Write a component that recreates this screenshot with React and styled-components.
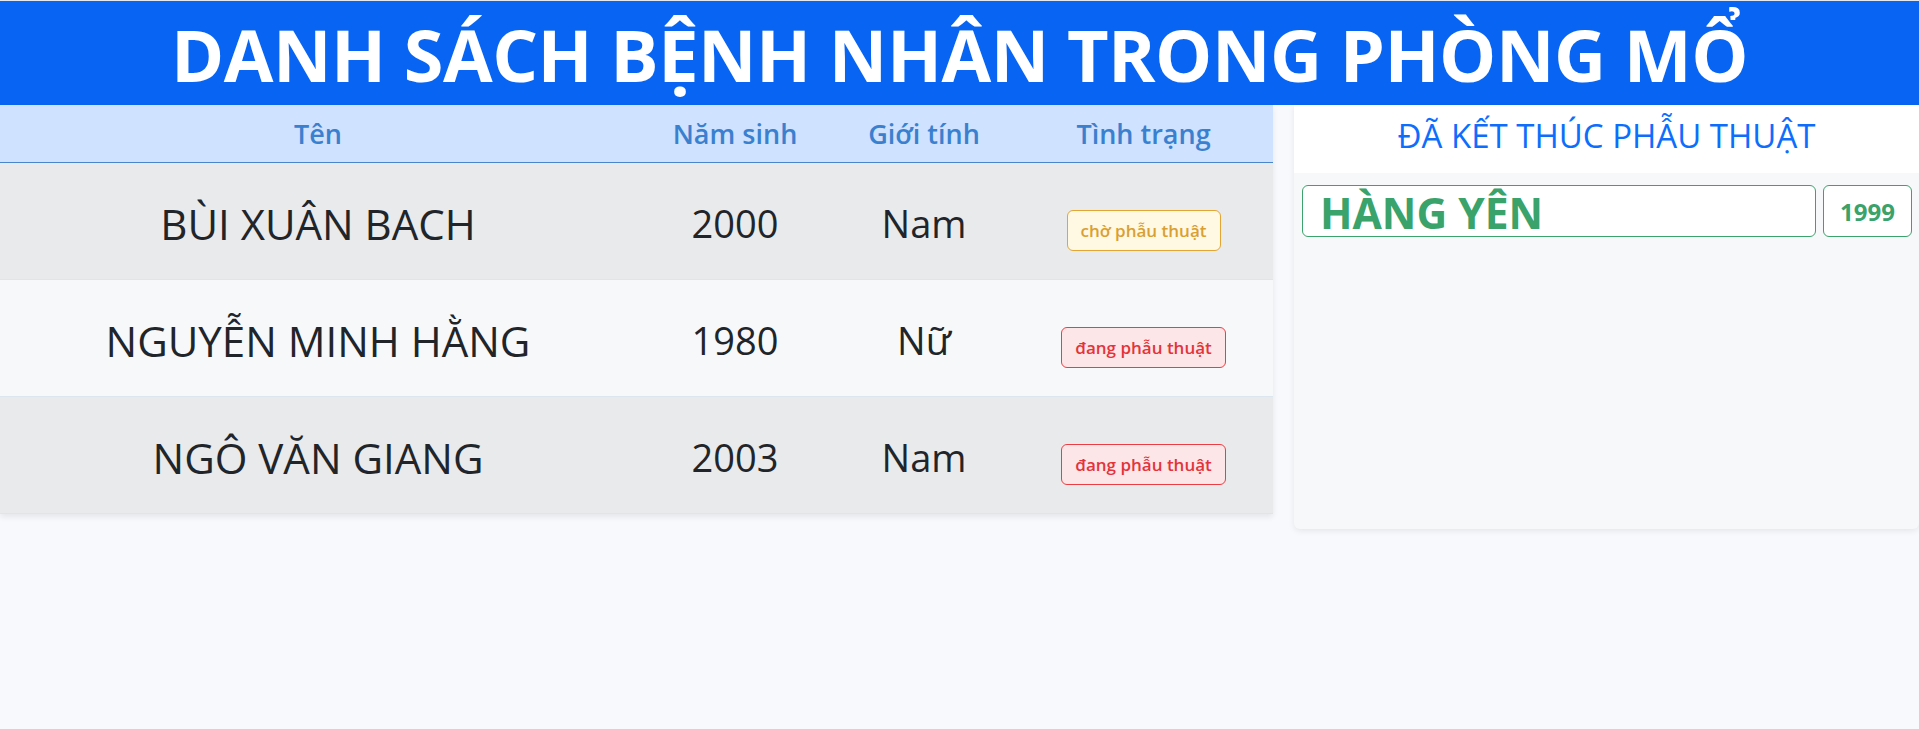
import React from 'react';
import styled, { createGlobalStyle } from 'styled-components';

const GlobalStyle = createGlobalStyle`
  html, body {
    margin: 0;
    padding: 0;
    background: #f8f9fd;
    font-family: "Open Sans", "Noto Sans", sans-serif;
    color: #212529;
  }
  * { box-sizing: border-box; }
`;

const patients = [
  { name: 'BÙI XUÂN BACH', year: 2000, gender: 'Nam', status: 'waiting' },
  { name: 'NGUYỄN MINH HẰNG', year: 1980, gender: 'Nữ', status: 'operating' },
  { name: 'NGÔ VĂN GIANG', year: 2003, gender: 'Nam', status: 'operating' },
];

const finished = [{ name: 'HÀNG YÊN', year: 1999 }];

const statusText = {
  waiting: 'chờ phẫu thuật',
  operating: 'đang phẫu thuật',
};

const App = () => {
  return (
    <>
      <GlobalStyle />
      <Page>
        <Header>
          <Title>DANH SÁCH BỆNH NHÂN TRONG PHÒNG MỔ</Title>
        </Header>
        <Content>
          <Table>
            <HeadRow>
              <HeadCell>Tên</HeadCell>
              <HeadCell>Năm sinh</HeadCell>
              <HeadCell>Giới tính</HeadCell>
              <HeadCell>Tình trạng</HeadCell>
            </HeadRow>
            {patients.map((p, i) => (
              <Row key={p.name} $striped={i % 2 === 0}>
                <NameCell>{p.name}</NameCell>
                <Cell>{p.year}</Cell>
                <Cell>{p.gender}</Cell>
                <Cell>
                  <Badge $status={p.status}>{statusText[p.status]}</Badge>
                </Cell>
              </Row>
            ))}
          </Table>
          <Panel>
            <PanelHeader>ĐÃ KẾT THÚC PHẪU THUẬT</PanelHeader>
            <PanelBody>
              {finished.map((f) => (
                <DoneRow key={f.name}>
                  <DoneName>{f.name}</DoneName>
                  <DoneYear>{f.year}</DoneYear>
                </DoneRow>
              ))}
            </PanelBody>
          </Panel>
        </Content>
      </Page>
    </>
  );
};

export default App;

const Page = styled.div`
  min-height: 729px;
  border-top: 1px solid #e4e7ec;
`;

const Header = styled.header`
  height: 104px;
  background: #0865f3;
  display: flex;
  align-items: center;
  justify-content: center;
`;

const Title = styled.h1`
  margin: 0;
  color: #fff;
  font-size: 72px;
  font-weight: 700;
  line-height: 1;
  padding-top: 2px;
  letter-spacing: -0.5px;
`;

const Content = styled.div`
  display: flex;
  align-items: flex-start;
  gap: 21px;
`;

const Table = styled.div`
  width: 1273px;
  flex-shrink: 0;
  box-shadow: 0 3px 6px rgba(0, 0, 0, 0.08);
`;

const columns = '636px 198px 180px 1fr';

const HeadRow = styled.div`
  display: grid;
  grid-template-columns: ${columns};
  height: 58px;
  align-items: center;
  background: #cfe2ff;
  border-bottom: 1px solid #4a86cc;
`;

const HeadCell = styled.div`
  text-align: center;
  font-size: 27px;
  font-weight: 600;
  color: #3a80cf;
`;

const Row = styled.div`
  display: grid;
  grid-template-columns: ${columns};
  height: 117px;
  align-items: center;
  background: ${(p) => (p.$striped ? '#e9eaec' : '#f7f8fa')};
  border-bottom: 1px solid #dde5ee;
`;

const Cell = styled.div`
  text-align: center;
  font-size: 38px;
  padding-top: 4px;
`;

const NameCell = styled(Cell)`
  font-size: 42px;
`;

const badgeColors = {
  waiting: { bg: '#fff8e3', border: '#e2a635', text: '#d9a031' },
  operating: { bg: '#fde6e7', border: '#ec3d44', text: '#e3343b' },
};

const Badge = styled.span`
  display: inline-block;
  margin-top: 12px;
  height: 41px;
  line-height: 39px;
  padding: 0 13px;
  font-size: 17px;
  font-weight: 600;
  border-radius: 6px;
  border: 1px solid ${(p) => badgeColors[p.$status].border};
  background: ${(p) => badgeColors[p.$status].bg};
  color: ${(p) => badgeColors[p.$status].text};
`;

const Panel = styled.section`
  flex: 1;
  min-height: 424px;
  background: #f7f8fa;
  border-radius: 0 0 6px 6px;
  box-shadow: 0 2px 6px rgba(0, 0, 0, 0.08);
  display: flex;
  flex-direction: column;
`;

const PanelHeader = styled.h2`
  margin: 0;
  height: 68px;
  display: flex;
  align-items: center;
  justify-content: center;
  background: #fff;
  color: #0d6efd;
  font-size: 33px;
  font-weight: 400;
  padding-bottom: 8px;
`;

const PanelBody = styled.div`
  flex: 1;
  padding: 12px 7px 8px 8px;
`;

const DoneRow = styled.div`
  display: flex;
  gap: 7px;
`;

const DoneName = styled.div`
  flex: 1;
  height: 52px;
  padding: 2px 17px 0;
  display: flex;
  align-items: center;
  background: #fff;
  border: 1px solid #3da36c;
  border-radius: 6px;
  color: #3aa26b;
  font-size: 42.5px;
  font-weight: 700;
`;

const DoneYear = styled.div`
  width: 89px;
  height: 52px;
  display: flex;
  align-items: center;
  justify-content: center;
  background: #fff;
  border: 1px solid #3da36c;
  border-radius: 6px;
  color: #3aa26b;
  font-size: 24px;
  font-weight: 700;
`;
